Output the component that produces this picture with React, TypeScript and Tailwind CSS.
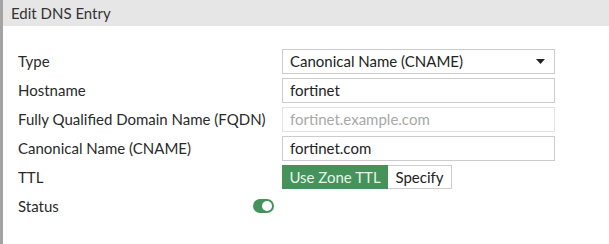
import React from "react";

const rows = ["Type", "Hostname", "Fully Qualified Domain Name (FQDN)", "Canonical Name (CNAME)", "TTL", "Status"];

function Field({ children, muted }: { children: React.ReactNode; muted?: boolean }) {
  return (
    <div
      className={`h-[25px] w-[273px] border px-[7px] flex items-center text-[15px] ${
        muted ? "border-[#e3e3e3] text-[#a8a8a8]" : "border-[#cccccc] text-[#222]"
      }`}
    >
      {children}
    </div>
  );
}

export default function App() {
  return (
    <div
      className="w-[609px] h-[244px] flex bg-white text-[#2a2a2a]"
      style={{ fontFamily: "Lato, 'Open Sans', sans-serif" }}
    >
      <div className="w-[3px] bg-[#a3a3a3]" />
      <div className="flex-1 flex flex-col">
        <div className="h-[26px] bg-[#e6e6e6] flex items-center pl-[8px] text-[15px] text-[#333]">
          Edit DNS Entry
        </div>
        <div className="grid grid-cols-[264px_1fr] gap-y-[4px] pl-[15px] pt-[23px] text-[15px]">
          <div className="h-[25px] flex items-center">{rows[0]}</div>
          <div className="h-[25px] w-[273px] border border-[#cccccc] pl-[7px] pr-[9px] flex items-center justify-between text-[15px] text-[#222]">
            <span>Canonical Name (CNAME)</span>
            <svg width="9" height="5" viewBox="0 0 9 5">
              <path d="M0 0 L9 0 L4.5 5 Z" fill="#222" />
            </svg>
          </div>

          <div className="h-[25px] flex items-center">{rows[1]}</div>
          <Field>fortinet</Field>

          <div className="h-[25px] flex items-center">{rows[2]}</div>
          <Field muted>fortinet.example.com</Field>

          <div className="h-[25px] flex items-center">{rows[3]}</div>
          <Field>fortinet.com</Field>

          <div className="h-[25px] flex items-center">{rows[4]}</div>
          <div className="h-[24px] flex text-[15px]">
            <div className="w-[106px] bg-[#45925a] text-[#e8f5ea] flex items-center justify-center">
              Use Zone TTL
            </div>
            <div className="w-[64px] border border-[#cccccc] border-l-0 text-[#222] flex items-center justify-center">
              Specify
            </div>
          </div>

          <div className="h-[25px] flex items-center col-span-2 relative">
            {rows[5]}
            <div className="absolute left-[235px] top-[5px] w-[21px] h-[14px] rounded-full bg-[#45925a] flex items-center justify-end pr-[2px]">
              <div className="w-[10px] h-[10px] rounded-full bg-white" />
            </div>
          </div>
        </div>
      </div>
    </div>
  );
}
